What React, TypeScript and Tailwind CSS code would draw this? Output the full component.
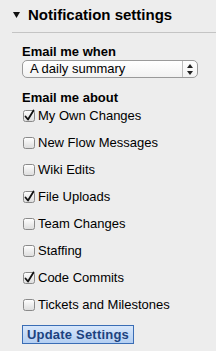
import React from 'react';

const items = [
  { label: 'My Own Changes', checked: true },
  { label: 'New Flow Messages', checked: false },
  { label: 'Wiki Edits', checked: false },
  { label: 'File Uploads', checked: true },
  { label: 'Team Changes', checked: false },
  { label: 'Staffing', checked: false },
  { label: 'Code Commits', checked: true },
  { label: 'Tickets and Milestones', checked: false },
];

const Box = ({ checked }: { checked: boolean }) => (
  <svg width="14" height="14" viewBox="0 0 14 14" className="shrink-0">
    <defs>
      <linearGradient id="cb" x1="0" y1="0" x2="0" y2="1">
        <stop offset="0" stopColor="#ffffff" />
        <stop offset="1" stopColor="#dcdcdc" />
      </linearGradient>
    </defs>
    <rect x="1.5" y="1.5" width="11" height="11" rx="2" fill="url(#cb)" stroke="#8a8a8a" />
    {checked && (
      <path d="M3.5 7.5 L6 10.5 L11.5 1.5" fill="none" stroke="#111" strokeWidth="1.8" strokeLinecap="round" strokeLinejoin="round" />
    )}
  </svg>
);

export default function App() {
  return (
    <div className="w-[216px] h-[351px] bg-[#ededed] text-black font-['Liberation_Sans',Arial,sans-serif] overflow-hidden">
      <div className="flex items-center gap-[8px] pl-[13px] pb-[2px] h-[32px]">
        <svg width="7" height="6" viewBox="0 0 7 6">
          <path d="M0 0 H7 L3.5 6 Z" fill="#111" />
        </svg>
        <span className="text-[15px] font-bold">Notification settings</span>
      </div>
      <div className="ml-[12px] h-px bg-[#c4c4c4]" />

      <div className="pl-[22px] pr-[18px]">
        <div className="text-[13px] font-bold mt-[11px] leading-[15px]">Email me when</div>
        <div className="mt-[1px] h-[18px] flex items-stretch rounded-[5px] border border-[#9a9a9a] bg-gradient-to-b from-white to-[#f2f2f2] text-[13px]">
          <span className="flex-1 pl-[7px] leading-[16px]">A daily summary</span>
          <span className="w-[15px] border-l border-[#bdbdbd] flex items-center justify-center">
            <svg width="6" height="11" viewBox="0 0 6 11">
              <path d="M0 4 H6 L3 0 Z M0 7 H6 L3 11 Z" fill="#222" />
            </svg>
          </span>
        </div>

        <div className="text-[13px] font-bold mt-[12px] leading-[15px]">Email me about</div>
        <div className="flex flex-col">
          {items.map((it, i) => (
            <label key={it.label} className={`flex items-center gap-[2px] h-[18px] text-[13px] ${i === 0 ? 'mt-[2px]' : 'mt-[9px]'}`}>
              <Box checked={it.checked} />
              <span>{it.label}</span>
            </label>
          ))}
        </div>

        <button className="mt-[11px] h-[19px] px-[4px] border border-[#3a6db5] bg-gradient-to-b from-[#d8e7fb] to-[#b4cff2] text-[13px] font-bold tracking-[0.2px] text-[#1c437f] leading-[17px]">
          Update Settings
        </button>
      </div>
    </div>
  );
}
